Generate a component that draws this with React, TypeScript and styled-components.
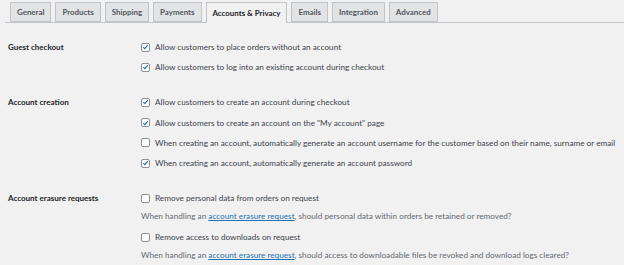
import React from "react"
import styled, { createGlobalStyle } from "styled-components"

const GlobalStyle = createGlobalStyle`
  body {
    margin: 0;
    background: #f1f1f1;
    font-family: Lato, "Open Sans", sans-serif;
    color: #3c434a;
  }
`

const tabs = ["General", "Products", "Shipping", "Payments", "Accounts & Privacy", "Emails", "Integration", "Advanced"]

type Option = { label: string; checked: boolean; desc?: string }

const sections: { title: string; options: Option[] }[] = [
  {
    title: "Guest checkout",
    options: [
      { label: "Allow customers to place orders without an account", checked: true },
      { label: "Allow customers to log into an existing account during checkout", checked: true },
    ],
  },
  {
    title: "Account creation",
    options: [
      { label: "Allow customers to create an account during checkout", checked: true },
      { label: "Allow customers to create an account on the \"My account\" page", checked: true },
      { label: "When creating an account, automatically generate an account username for the customer based on their name, surname or email", checked: false },
      { label: "When creating an account, automatically generate an account password", checked: true },
    ],
  },
  {
    title: "Account erasure requests",
    options: [
      {
        label: "Remove personal data from orders on request",
        checked: false,
        desc: ", should personal data within orders be retained or removed?",
      },
      {
        label: "Remove access to downloads on request",
        checked: false,
        desc: ", should access to downloadable files be revoked and download logs cleared?",
      },
    ],
  },
]

function Checkbox({ checked }: { checked: boolean }) {
  return (
    <Box>
      {checked && (
        <svg width="8" height="8" viewBox="0 0 8 8">
          <path d="M1.4 4.2 L3.2 5.9 L6.6 1.9" fill="none" stroke="#2271b1" strokeWidth="1.3" />
        </svg>
      )}
    </Box>
  )
}

export default function App() {
  return (
    <>
      <GlobalStyle />
      <Page>
        <TabBar>
          {tabs.map((t) => (
            <Tab key={t} active={t === "Accounts & Privacy"}>{t}</Tab>
          ))}
        </TabBar>
        <Form>
          {sections.map((s) => (
            <Section key={s.title}>
              <Title>{s.title}</Title>
              <Fields>
                {s.options.map((o) => (
                  <React.Fragment key={o.label}>
                    <OptionRow>
                      <Checkbox checked={o.checked} />
                      <span>{o.label}</span>
                    </OptionRow>
                    {o.desc && (
                      <Desc>
                        When handling an <a href="#x">account erasure request</a>
                        {o.desc}
                      </Desc>
                    )}
                  </React.Fragment>
                ))}
              </Fields>
            </Section>
          ))}
        </Form>
      </Page>
    </>
  )
}

const Page = styled.div`
  width: 624px;
  height: 265px;
  overflow: hidden;
`

const TabBar = styled.div`
  display: flex;
  gap: 4px;
  padding: 2px 0 0 5px;
  margin-left: 5px;
  border-bottom: 1px solid #c3c4c7;
  height: 20px;
  box-sizing: content-box;
`

const Tab = styled.div<{ active?: boolean }>`
  box-sizing: border-box;
  height: ${(p) => (p.active ? "21px" : "20px")};
  padding: 0 6px;
  display: flex;
  align-items: center;
  font-size: 7.9px;
  font-weight: 700;
  color: ${(p) => (p.active ? "#1d2327" : "#50575e")};
  background: ${(p) => (p.active ? "#f1f1f1" : "#e2e3e4")};
  border: 1px solid #c3c4c7;
  border-bottom: ${(p) => (p.active ? "none" : "1px solid #c3c4c7")};
`

const Form = styled.div`
  padding: 14px 0 0 8px;
  display: flex;
  flex-direction: column;
  gap: 15px;
`

const Section = styled.div`
  display: grid;
  grid-template-columns: 133px 1fr;
`

const Title = styled.div`
  font-size: 8px;
  font-weight: 700;
  color: #1d2327;
  line-height: 20px;
`

const Fields = styled.div`
  display: flex;
  flex-direction: column;
`

const OptionRow = styled.label`
  display: flex;
  align-items: center;
  gap: 5px;
  height: 20.2px;
  font-size: 8.2px;
  color: #3c434a;
  white-space: nowrap;
`

const Box = styled.span`
  width: 9px;
  height: 9px;
  box-sizing: border-box;
  border: 1px solid #8c8f94;
  border-radius: 2px;
  background: #fff;
  display: flex;
  align-items: center;
  justify-content: center;
  flex: none;
`

const Desc = styled.div`
  font-size: 8.2px;
  color: #646970;
  height: 18.6px;
  line-height: 16px;
  white-space: nowrap;
  a {
    color: #2271b1;
    text-decoration: underline;
  }
`
